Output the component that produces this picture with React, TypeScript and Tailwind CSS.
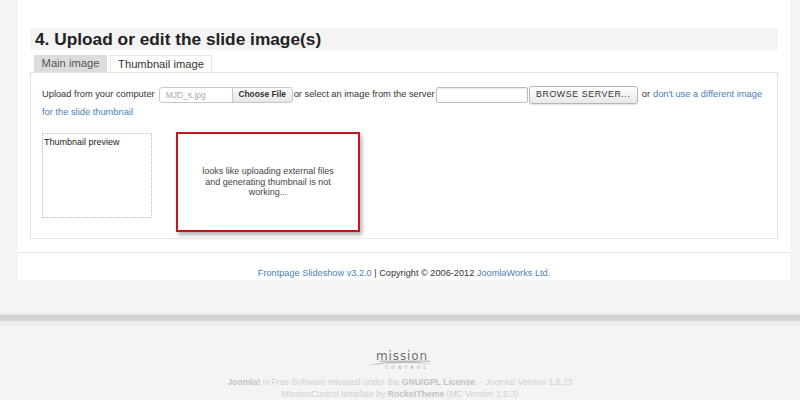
import React from "react";

function Logo() {
  return (
    <svg width="80" height="22" viewBox="0 0 80 22" className="block">
      <text x="41" y="11" textAnchor="middle" fontSize="12" letterSpacing="0.9" fill="#6e6e6e" fontFamily="'DejaVu Sans', sans-serif">mission</text>
      <line x1="19" y1="12.2" x2="69" y2="12.2" stroke="#8a8a8a" strokeWidth="0.7" />
      <path d="M 6 16.5 Q 40 9 73 15.5 Q 40 12.3 6 16.5 Z" fill="#b9b9b9" />
      <text x="24" y="19.6" fontSize="4.6" letterSpacing="3.1" fill="#9a9a9a" fontFamily="'DejaVu Sans', sans-serif">CONTROL</text>
    </svg>
  );
}

export default function App() {
  return (
    <div className="w-[800px] h-[400px] overflow-hidden bg-[#f4f4f4] font-['Liberation_Sans',Arial,sans-serif]">
      <div className="ml-[18px] w-[772px] bg-white pt-[28px]">
        <div className="ml-[12px] w-[748px]">
          <div className="h-[22px] bg-[#f4f4f4] pl-[5px] text-[17.3px] font-bold leading-[22px] text-[#222]">
            4. Upload or edit the slide image(s)
          </div>
          <div className="mt-[5px] flex h-[17px] items-end pl-[4px] text-[11.2px]">
            <div className="flex h-[17px] w-[73px] items-center justify-center bg-[#dcdcdc] text-[#555]">Main image</div>
            <div className="ml-[3px] flex h-[17px] w-[102px] items-center justify-center border border-b-0 border-[#e4e4e4] bg-white text-[#333]">Thumbnail image</div>
          </div>
          <div className="h-[167px] border border-[#e4e4e4] bg-white px-[11px] pt-[12px] text-[9.3px] text-[#333]">
            <div className="leading-[17px]">
              <div className="flex h-[19px] items-center whitespace-nowrap">
                <span>Upload from your computer</span>
                <div className="ml-[4px] flex h-[16px] w-[134px] items-center overflow-hidden rounded-[3px] border border-[#c8c8c8] bg-white">
                  <span className="w-[73px] border-r border-[#c8c8c8] pl-[6px] text-[8.5px] leading-[14px] text-[#aaa]">MJD_s.jpg</span>
                  <span className="flex h-full flex-1 items-center justify-center bg-gradient-to-b from-[#fafafa] to-[#e6e6e6] text-[8.4px] font-bold text-[#333]">Choose File</span>
                </div>
                <span className="ml-[1px]">or select an image from the server</span>
                <div className="ml-[1px] h-[16px] w-[92px] rounded-[2px] border border-[#bdbdbd] bg-white shadow-[inset_0_1px_1px_rgba(0,0,0,0.08)]" />
                <div className="ml-[1px] flex h-[18px] w-[109px] items-center justify-center rounded-[3px] border border-[#b5b5b5] bg-gradient-to-b from-[#ffffff] to-[#e8e8e8] text-[8.8px] tracking-[0.6px] text-[#333] shadow-[0_1px_1px_rgba(0,0,0,0.12)]">
                  BROWSE SERVER...
                </div>
                <span className="ml-[4px]">or </span>
                <span className="ml-[3px] text-[#4a80b8]">don't use a different image</span>
              </div>
              <div className="text-[#4a80b8]">for the slide thumbnail</div>
            </div>
            <div className="mt-[11px] flex items-start">
              <div className="mt-[1px] h-[85px] w-[110px] border border-dotted border-[#bbb] pl-[1px] pt-[2px] text-[9px] leading-[12px] text-[#222]">
                Thumbnail preview
              </div>
              <div className="ml-[24px] flex h-[100px] w-[184px] items-center justify-center border-2 border-[#c4161c] bg-white text-center text-[9px] leading-[10.5px] text-[#444] shadow-[2px_3px_4px_rgba(0,0,0,0.3)]">
                <div>
                  looks like uploading external files
                  <br />
                  and generating thumbnail is not
                  <br />
                  working...
                </div>
              </div>
            </div>
          </div>
        </div>
        <div className="mt-[13px] h-[28px] border-t border-[#e8e8e8] pt-[14px] text-center text-[9.2px] leading-[12px] text-[#333]">
          <span className="text-[#4a80b8]">Frontpage Slideshow v3.2.0</span> | Copyright © 2006-2012{" "}
          <span className="text-[#4a80b8]">JoomlaWorks Ltd.</span>
        </div>
      </div>
      <div className="mt-[33px] h-[2px] bg-[#ebebeb]" />
      <div className="h-[6px] bg-[#d3d3d3]" />
      <div className="h-[5px] bg-[#ededed]" />
      <div className="mt-[23px] flex justify-center pl-[2px]">
        <Logo />
      </div>
      <div className="mt-[5px] text-center text-[8.6px] leading-[12px] text-[#d0d0d0]">
        <div>
          <span className="font-bold text-[#c2c2c2]">Joomla!</span> is Free Software released under the{" "}
          <span className="font-bold text-[#c2c2c2]">GNU/GPL License</span>. - Joomla! Version 1.5.23
        </div>
        <div>
          MissionControl template by <span className="font-bold text-[#c2c2c2]">RocketTheme</span> (MC Version 1.5.3)
        </div>
      </div>
    </div>
  );
}
